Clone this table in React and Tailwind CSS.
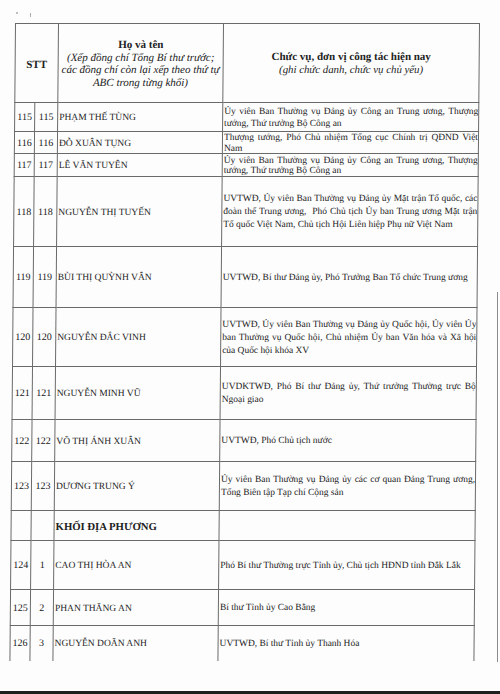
import React from "react";

const rows = [
  { a: "115", b: "115", name: "PHẠM THẾ TÙNG", h: 29, lh: "leading-[12.5px]", role: ["Ủy viên Ban Thường vụ Đảng ủy Công an Trung ương, Thượng", "tướng, Thứ trưởng Bộ Công an"] },
  { a: "116", b: "116", name: "ĐỖ XUÂN TỤNG", h: 22, lh: "leading-[10.5px]", role: ["Thượng tướng, Phó Chủ nhiệm Tổng cục Chính trị QĐND Việt", "Nam"] },
  { a: "117", b: "117", name: "LÊ VĂN TUYÊN", h: 23, lh: "leading-[10.5px]", role: ["Ủy viên Ban Thường vụ Đảng ủy Công an Trung ương, Thượng", "tướng, Thứ trưởng Bộ Công an"] },
  { a: "118", b: "118", name: "NGUYỄN THỊ TUYẾN", h: 70, lh: "leading-[13px]", role: ["UVTWĐ, Ủy viên Ban Thường vụ Đảng ủy Mặt trận Tổ quốc, các", "đoàn thể Trung ương,  Phó Chủ tịch Ủy ban Trung ương Mặt trận", "Tổ quốc Việt Nam, Chủ tịch Hội Liên hiệp Phụ nữ Việt Nam"] },
  { a: "119", b: "119", name: "BÙI THỊ QUỲNH VÂN", h: 61, lh: "leading-[13px]", role: ["UVTWĐ, Bí thư Đảng ủy, Phó Trưởng Ban Tổ chức Trung ương"] },
  { a: "120", b: "120", name: "NGUYỄN ĐẮC VINH", h: 59, lh: "leading-[13px]", role: ["UVTWĐ, Ủy viên Ban Thường vụ Đảng ủy Quốc hội, Ủy viên Ủy", "ban Thường vụ Quốc hội, Chủ nhiệm Ủy ban Văn hóa và Xã hội", "của Quốc hội khóa XV"] },
  { a: "121", b: "121", name: "NGUYỄN MINH VŨ", h: 53, lh: "leading-[13px]", role: ["UVDKTWĐ, Phó Bí thư Đảng ủy, Thứ trưởng Thường trực Bộ", "Ngoại giao"] },
  { a: "122", b: "122", name: "VÕ THỊ ÁNH XUÂN", h: 42, lh: "leading-[13px]", role: ["UVTWĐ, Phó Chủ tịch nước"] },
  { a: "123", b: "123", name: "DƯƠNG TRUNG Ý", h: 49, lh: "leading-[13px]", role: ["Ủy viên Ban Thường vụ Đảng ủy các cơ quan Đảng Trung ương,", "Tổng Biên tập Tạp chí Cộng sản"] },
  { section: "KHỐI ĐỊA PHƯƠNG", h: 30 },
  { a: "124", b: "1", name: "CAO THỊ HÒA AN", h: 49, lh: "leading-[13px]", role: ["Phó Bí thư Thường trực Tỉnh ủy, Chủ tịch HĐND tỉnh Đắk Lắk"] },
  { a: "125", b: "2", name: "PHAN THĂNG AN", h: 36, lh: "leading-[13px]", role: ["Bí thư Tỉnh ủy Cao Bằng"] },
  { a: "126", b: "3", name: "NGUYỄN DOÃN ANH", h: 35, lh: "leading-[13px]", role: ["UVTWĐ, Bí thư Tỉnh ủy Thanh Hóa"], last: true },
];

function Role({ lines, lh }) {
  return (
    <div className={"text-[9.45px] " + lh}>
      {lines.map((l, i) => (
        <div
          key={i}
          className={
            i < lines.length - 1
              ? "text-justify [text-align-last:justify] whitespace-pre"
              : "text-left whitespace-pre"
          }
        >
          {l}
        </div>
      ))}
    </div>
  );
}

export default function App() {
  const cell = "border border-[#6a6a6a] align-middle p-0 overflow-hidden";
  return (
    <div
      className="w-[500px] h-[694px] bg-[#fdfdfd] flex flex-col overflow-hidden text-[#222]"
      style={{ fontFamily: '"Liberation Serif", "Times New Roman", serif' }}
    >
      <div className="flex flex-1 min-h-0">
        <div className="flex-1 flex flex-col min-h-0 overflow-hidden">
          <div className="h-[23px] shrink-0 flex items-start">
            <span className="ml-[16px] mt-[12px] w-[2px] h-[2px] rounded-full bg-[#aaa]"></span>
            <span className="ml-[12px] mt-[13px] w-[1px] h-[4px] bg-[#aaa]"></span>
          </div>
          <div className="pl-[15px] origin-top-left skew-x-[-0.5deg]">
            <table className="table-fixed border-collapse w-[464px]">
              <colgroup>
                <col className="w-[20px]" />
                <col className="w-[23px]" />
                <col className="w-[165px]" />
                <col className="w-[256px]" />
              </colgroup>
              <thead>
                <tr className="h-[79px]">
                  <th colSpan={2} className={cell + " text-[11px] font-bold text-center"}>
                    <div className="pt-[2px]">STT</div>
                  </th>
                  <th className={cell + " text-center font-normal"}>
                    <div className="text-[11px] leading-[13px] font-bold">Họ và tên</div>
                    <div className="text-[11px] leading-[12.5px] italic whitespace-nowrap">
                      (Xếp đồng chí Tổng Bí thư trước;
                      <br />
                      các đồng chí còn lại xếp theo thứ tự
                      <br />
                      ABC trong từng khối)
                    </div>
                  </th>
                  <th className={cell + " text-center font-normal"}>
                    <div className="text-[11px] leading-[13px] font-bold">Chức vụ, đơn vị công tác hiện nay</div>
                    <div className="text-[10.8px] leading-[13px] italic">(ghi chức danh, chức vụ chủ yếu)</div>
                  </th>
                </tr>
              </thead>
              <tbody>
                {rows.map((r, i) => {
                  const c = r.last ? cell + " border-b-0" : cell;
                  if (r.section) {
                    return (
                      <tr key={i} style={{ height: r.h }}>
                        <td className={c}></td>
                        <td className={c}></td>
                        <td className={c + " text-[10.7px] leading-[12px] font-bold pl-[1px] whitespace-nowrap"}>{r.section}</td>
                        <td className={c}></td>
                      </tr>
                    );
                  }
                  return (
                    <tr key={i} style={{ height: r.h }}>
                      <td className={c + " text-[10px] leading-[12px] text-center"}>{r.a}</td>
                      <td className={c + " text-[10px] leading-[12px] text-center"}>{r.b}</td>
                      <td className={c + " text-[9.5px] leading-[12px] pl-[1px] whitespace-nowrap"}>{r.name}</td>
                      <td className={c + " pl-[1px] pr-0"}>
                        <Role lines={r.role} lh={r.lh} />
                      </td>
                    </tr>
                  );
                })}
              </tbody>
            </table>
          </div>
        </div>
        <div className="w-[3px] pt-[292px]">
          <div className="w-px h-[370px] bg-[#8a8a8a]"></div>
        </div>
      </div>
      <div className="h-[3px] bg-[#1e1e1e]"></div>
    </div>
  );
}
